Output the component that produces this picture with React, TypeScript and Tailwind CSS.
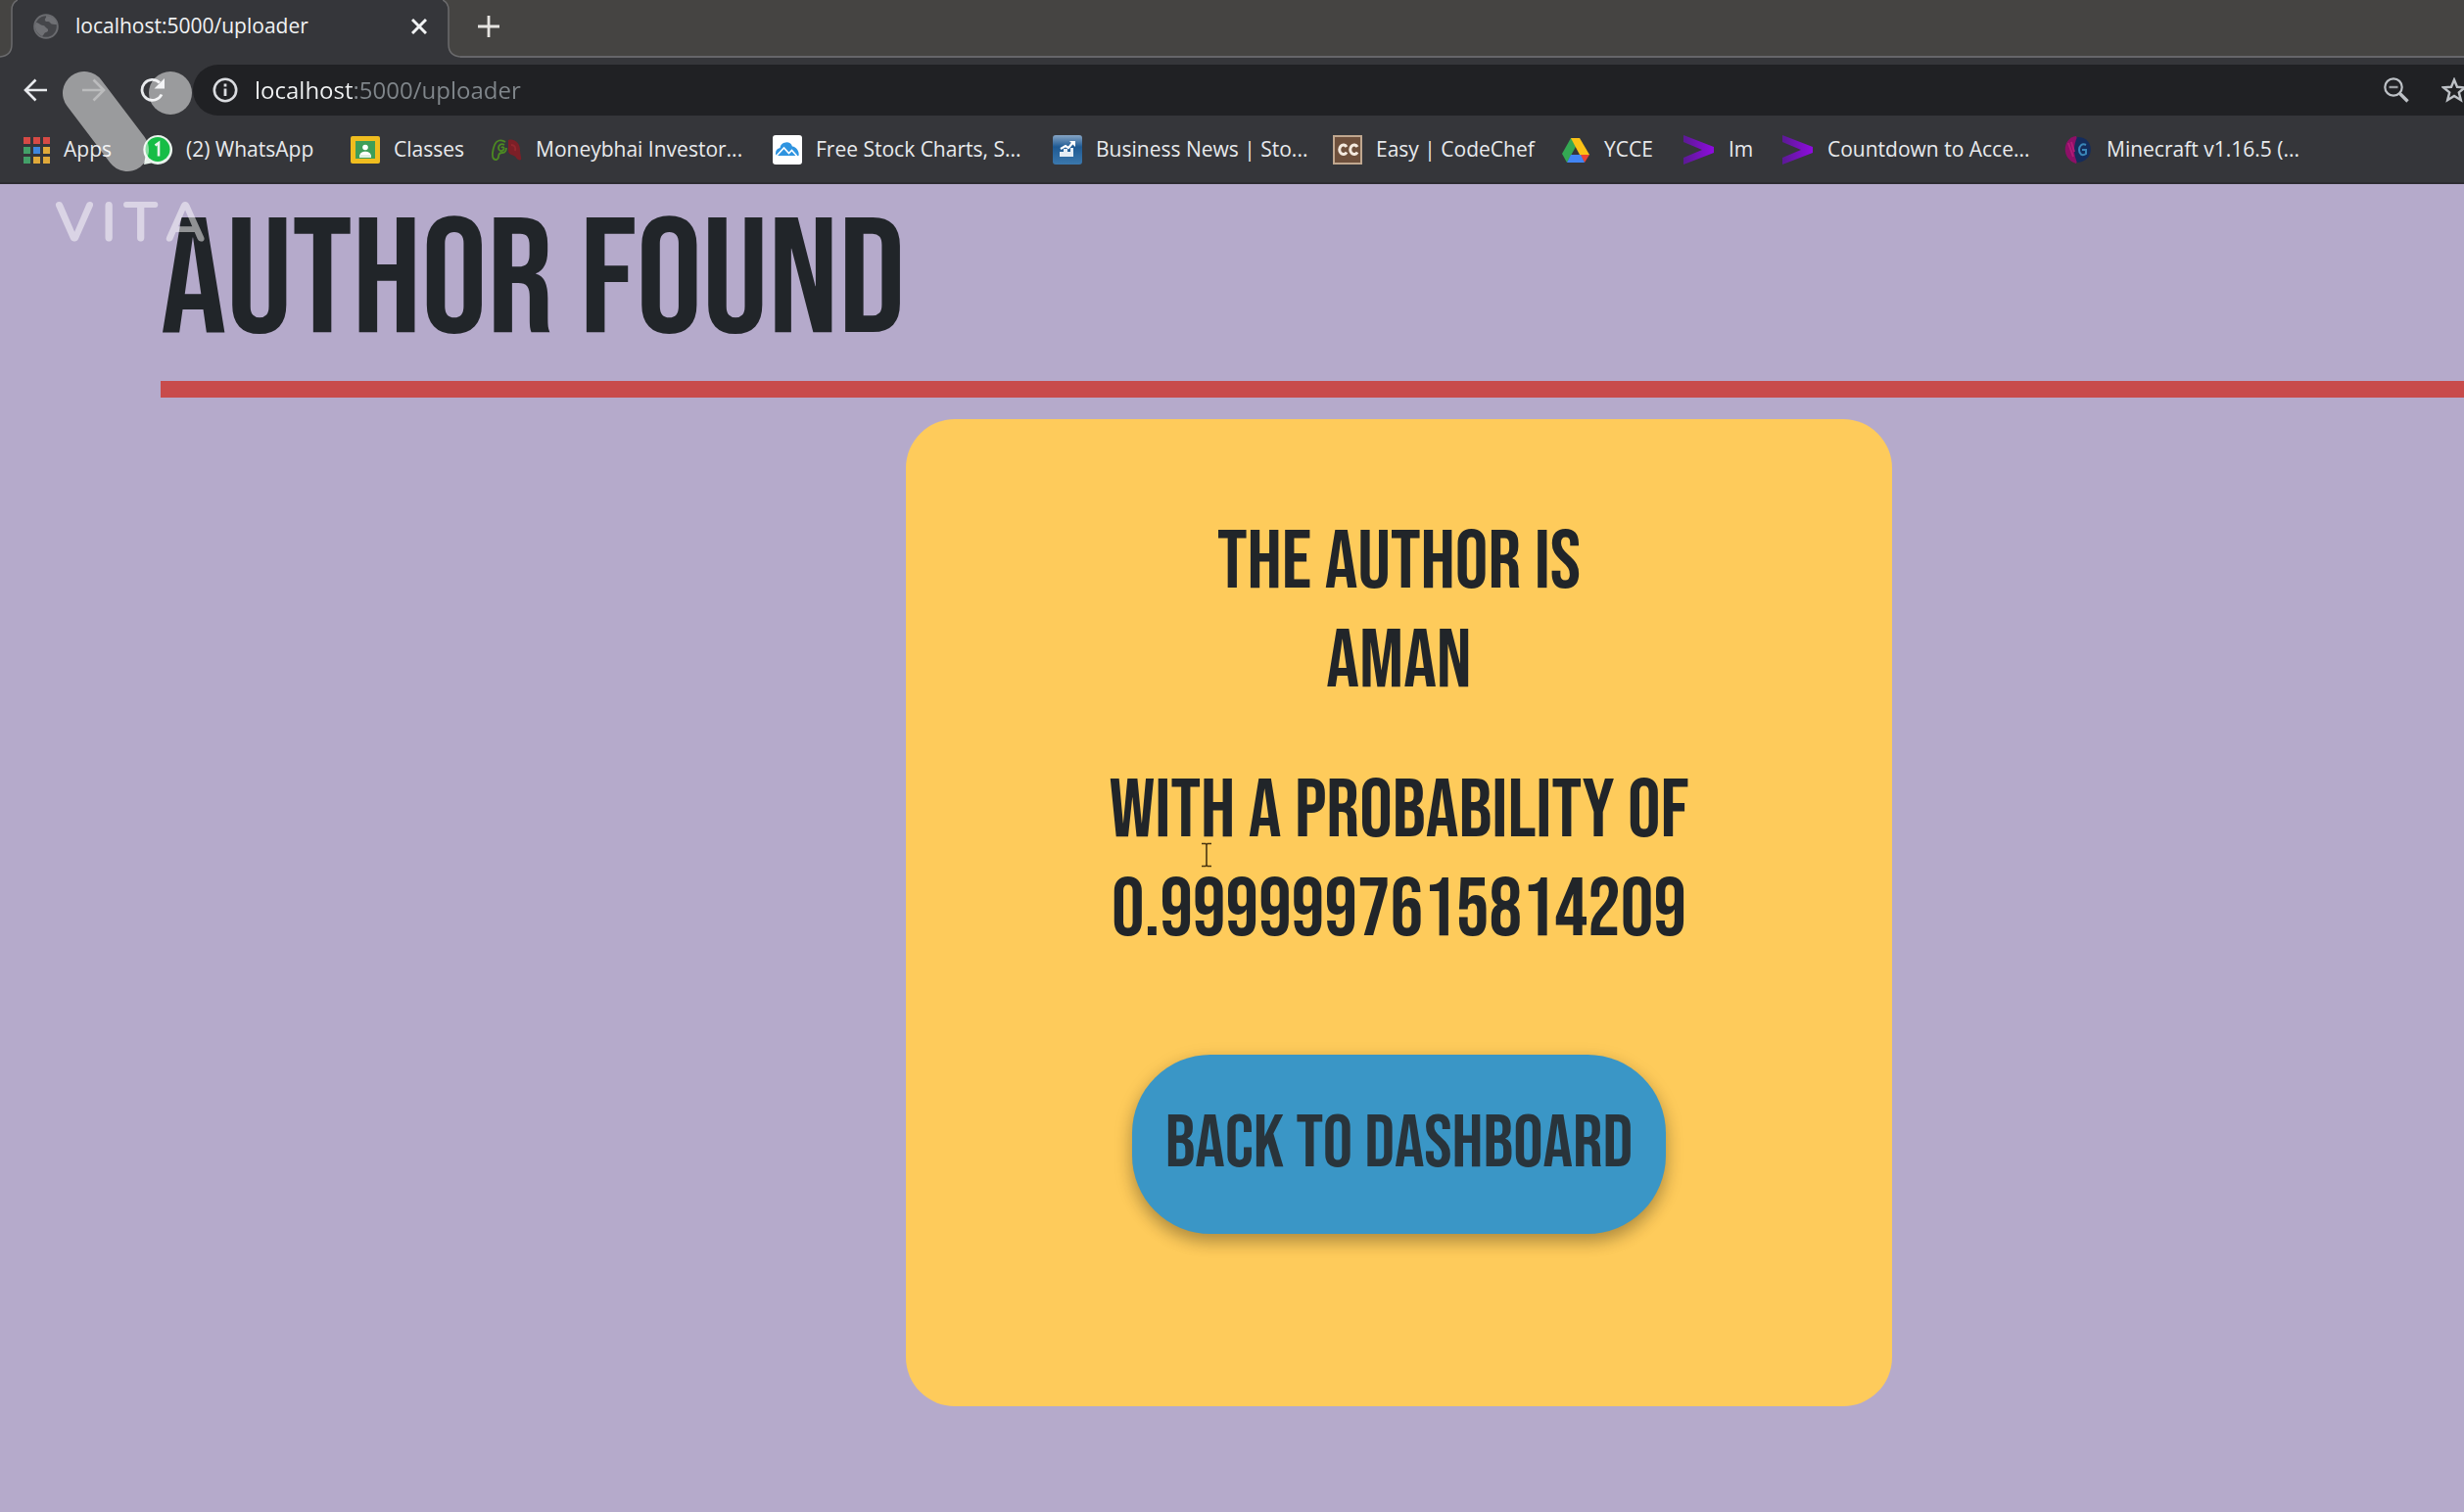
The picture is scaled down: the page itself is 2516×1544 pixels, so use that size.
import type { ReactNode } from 'react';

function GlobeIcon() {
  return (
    <svg viewBox="0 0 26 26" className="size-[26px] shrink-0" aria-hidden="true">
      <circle cx="13" cy="13" r="11.8" fill="#45464a" stroke="#6a6b6f" strokeWidth="2" />
      <path d="M3 9c3 0 4 3 7 3 2 0 2 2 4 3s1 4-1 4-2 3-4 4C5 21 2 17 2 13c0-2 0-3 1-4zM13 2c1 2-2 3-1 5s4 0 5 2 4 2 7 2c0-5-5-9-11-9z" fill="#6f7074" />
    </svg>
  );
}

function AppsIcon() {
  const colors = ['#d64a45', '#d64a45', '#d64a45', '#43a068', '#3f86dd', '#e0a93a', '#43a068', '#e0a93a', '#e0a93a'];
  return (
    <svg viewBox="0 0 28 28" className="size-7 shrink-0" aria-hidden="true">
      {colors.map((c, i) => (
        <rect key={i} x={1 + (i % 3) * 10} y={1 + Math.floor(i / 3) * 10} width="7" height="7" fill={c} />
      ))}
    </svg>
  );
}

function WhatsAppIcon() {
  return (
    <svg viewBox="0 0 30 30" className="size-[30px] shrink-0" aria-hidden="true">
      <path d="M15 0a15 15 0 1 1-6.500 28.500L1 30l1.300-7.500A15 15 0 0 1 15 0z" fill="#e9f3ec" />
      <circle cx="15" cy="14.500" r="12.500" fill="#16bd46" />
      <path d="M12.500 10.500l3.500-2.500v13.500" fill="none" stroke="#e9f3ec" strokeWidth="2.600" />
    </svg>
  );
}

function ClassroomIcon() {
  return (
    <svg viewBox="0 0 30 28" className="h-7 w-[30px] shrink-0" aria-hidden="true">
      <rect width="30" height="28" rx="2" fill="#f0bd1f" />
      <rect x="5" y="5" width="20" height="18" fill="#3f9e58" />
      <circle cx="15" cy="11.500" r="2.800" fill="#fff" />
      <path d="M9.500 19.500c0-5 11-5 11 0z" fill="#fff" />
      <rect x="9" y="19" width="12" height="3" fill="#dff0e2" />
    </svg>
  );
}

function MoneybhaiIcon() {
  return (
    <svg viewBox="0 0 32 24" className="h-6 w-8 shrink-0" aria-hidden="true">
      <path d="M15 4C11 1 6 2 4 7s-3 12-1 14 5 1 5-2 1-4 4-4 4-3 4-5M14 7c-3-2-6 0-6 3s3 4 5 2-1-4-2-2" fill="none" stroke="#4c8a22" strokeWidth="1.800" />
      <path d="M18 2c7-2 12 4 12 10 0 5 2 9 1 10s-4 0-5-2-3-2-5-3-3-2-3-5 0-7 0-10z" fill="#7c1f27" />
      <path d="M21 7c3 0 5 2 4 6" fill="none" stroke="#94272f" strokeWidth="2" />
    </svg>
  );
}

function StockChartsIcon() {
  return (
    <svg viewBox="0 0 30 30" className="size-[30px] shrink-0" aria-hidden="true">
      <rect width="30" height="30" rx="3" fill="#fff" />
      <path d="M4 21a5 5 0 0 1 3.500-8 6.500 6.500 0 0 1 12.500-1.500c4 .5 7.500 5 6.500 9.500H4z" fill="#2f94e0" />
      <path d="M4 21l7.500-8 5 5.500 3-3 5 5.500" fill="none" stroke="#fff" strokeWidth="1.600" />
    </svg>
  );
}

function BusinessIcon() {
  return (
    <svg viewBox="0 0 30 30" className="size-[30px] shrink-0" aria-hidden="true">
      <defs>
        <linearGradient id="biz" x1="0" y1="0" x2="0" y2="1">
          <stop offset="0" stopColor="#86a5c5" />
          <stop offset=".4" stopColor="#1f5a93" />
          <stop offset="1" stopColor="#3b78ad" />
        </linearGradient>
      </defs>
      <rect width="30" height="30" rx="3" fill="url(#biz)" />
      <path d="M7 22v-5h4v-3h4v3h3v-4h3v9z" fill="#e4ecf4" />
      <path d="M8 14l5-3 3 2 5-6" fill="none" stroke="#fff" strokeWidth="2.200" />
      <path d="M17 6h6v6z" fill="#fff" />
    </svg>
  );
}

function CodeChefIcon() {
  return (
    <svg viewBox="0 0 30 30" className="size-[30px] shrink-0" aria-hidden="true">
      <rect x="1" y="1" width="28" height="28" fill="#6e503c" stroke="#c0a78f" strokeWidth="2" />
      <path d="M14 12a4 4.800 0 1 0 0 5.500M25 12a4 4.800 0 1 0 0 5.500" fill="none" stroke="#f3e9de" strokeWidth="3" />
    </svg>
  );
}

function DriveIcon() {
  return (
    <svg viewBox="0 0 30 27" className="h-[27px] w-[30px] shrink-0" aria-hidden="true">
      <path d="M10 1h5l1 7L6 26 1 17z" fill="#34a853" />
      <path d="M10 1h9l10 17H19z" fill="#fbc116" />
      <path d="M29 18l-5 8-5-8z" fill="#ea4335" />
      <path d="M10 18h10l4 8H6z" fill="#4285f4" />
    </svg>
  );
}

function AccentureIcon() {
  return (
    <svg viewBox="0 0 32 30" className="h-[30px] w-8 shrink-0" aria-hidden="true">
      <defs>
        <linearGradient id="acc" x1="0" x2="1" y1="0" y2="0">
          <stop offset="0" stopColor="#5b1a94" />
          <stop offset="1" stopColor="#8f0be0" />
        </linearGradient>
      </defs>
      <path d="M0 0l31 12v6L0 30v-7l19-8L0 7z" fill="url(#acc)" />
    </svg>
  );
}

function MinecraftIcon() {
  return (
    <svg viewBox="0 0 30 28" className="h-7 w-[30px] shrink-0" aria-hidden="true">
      <path d="M13 0C-2 2-2 24 13 28c4-9 4-19 0-28z" fill="#8d1067" />
      <path d="M14 1c17-1 20 24 0 26-4-9-4-17 0-26z" fill="#142c5c" />
      <path d="M23 9c-4-2-7 1-7 5s3 7 7 4v-4h-4" fill="none" stroke="#3a86b8" strokeWidth="2" />
      <path d="M5 7l5 14M8 6l3 10" stroke="#b01c77" strokeWidth="2" />
    </svg>
  );
}

const bookmarks: { label: string; icon: ReactNode; width: string }[] = [
  { label: 'Apps', icon: <AppsIcon />, width: 'w-[123px]' },
  { label: '(2) WhatsApp', icon: <WhatsAppIcon />, width: 'w-[212px]' },
  { label: 'Classes', icon: <ClassroomIcon />, width: 'w-[143px]' },
  { label: 'Moneybhai Investor...', icon: <MoneybhaiIcon />, width: 'w-[288px]' },
  { label: 'Free Stock Charts, S...', icon: <StockChartsIcon />, width: 'w-[286px]' },
  { label: 'Business News | Sto...', icon: <BusinessIcon />, width: 'w-[286px]' },
  { label: 'Easy | CodeChef', icon: <CodeChefIcon />, width: 'w-[233px]' },
  { label: 'YCCE', icon: <DriveIcon />, width: 'w-[125px]' },
  { label: 'Im', icon: <AccentureIcon />, width: 'w-[101px]' },
  { label: 'Countdown to Acce...', icon: <AccentureIcon />, width: 'w-[287px]' },
  { label: 'Minecraft v1.16.5 (...', icon: <MinecraftIcon />, width: 'w-[260px]' },
];

function TabStrip() {
  return (
    <div className="flex h-[59px] bg-[#454442]">
      <svg viewBox="0 0 18 59" className="h-[59px] w-[18px] shrink-0" aria-hidden="true">
        <path d="M0 59V58Q12 57 12 45V10Q12 3 18 0V59z" fill="#35363a" />
        <path d="M0 58Q12 57 12 45V10Q12 3 18 0" fill="none" stroke="#6b6b6d" strokeWidth="1.500" />
      </svg>
      <div role="tab" aria-selected="true" className="flex w-[434px] items-center bg-[#35363a] pr-4 pb-1.5 pl-4 text-[21px] text-[#f1f3f4]">
        <GlobeIcon />
        <span className="ml-[17px] flex-1 whitespace-nowrap">localhost:5000/uploader</span>
        <button aria-label="Close tab" className="grid size-4 place-items-center">
          <svg viewBox="0 0 16 16" className="size-4" aria-hidden="true">
            <path d="M1 1l14 14M15 1L1 15" stroke="#f1f3f4" strokeWidth="3" />
          </svg>
        </button>
      </div>
      <svg viewBox="0 0 18 59" className="h-[59px] w-[18px] shrink-0" aria-hidden="true">
        <path d="M18 59V58Q6 57 6 45V10Q6 3 0 0V59z" fill="#35363a" />
        <path d="M18 58Q6 57 6 45V10Q6 3 0 0" fill="none" stroke="#6b6b6d" strokeWidth="1.500" />
      </svg>
      <div className="flex-1 border-b-2 border-[#66666a] pt-4 pl-[18px]">
        <button aria-label="New tab" className="block size-[22px]">
          <svg viewBox="0 0 22 22" className="size-[22px]" aria-hidden="true">
            <path d="M11 0v22M0 11h22" stroke="#e6e4e1" strokeWidth="2.800" />
          </svg>
        </button>
      </div>
    </div>
  );
}

function Toolbar() {
  return (
    <div className="flex h-[59px] items-center pt-[7px]">
      <button aria-label="Back" className="ml-6 size-6">
        <svg viewBox="0 0 24 24" className="size-6" aria-hidden="true">
          <path d="M24 12H2M12.500 1.500L2 12l10.500 10.500" fill="none" stroke="#e8eaed" strokeWidth="2.600" />
        </svg>
      </button>
      <button aria-label="Forward" className="ml-9 size-6">
        <svg viewBox="0 0 24 24" className="size-6" aria-hidden="true">
          <path d="M0 12h22M11.500 1.500L22 12 11.500 22.500" fill="none" stroke="#77787b" strokeWidth="2.600" />
        </svg>
      </button>
      <button aria-label="Reload" className="ml-[35px] size-[26px]">
        <svg viewBox="0 0 26 26" className="size-[26px]" aria-hidden="true">
          <path d="M22 17.500A10.500 10.500 0 1 1 20 5.500" fill="none" stroke="#e8eaed" strokeWidth="2.800" />
          <path d="M25 1v10.500H14.500z" fill="#e8eaed" />
        </svg>
      </button>
      <div className="ml-7 flex h-[52px] flex-1 items-center rounded-l-full bg-[#202124] pl-5">
        <svg viewBox="0 0 26 26" className="size-[26px] shrink-0" aria-hidden="true">
          <circle cx="13" cy="13" r="11.200" fill="none" stroke="#dadce0" strokeWidth="2.600" />
          <path d="M13 11.500v7.500M13 6.500v3" stroke="#dadce0" strokeWidth="2.800" />
        </svg>
        <input
          aria-label="Address"
          defaultValue="localhost:5000/uploader"
          className="ml-[17px] min-w-0 flex-1 bg-[linear-gradient(90deg,#f1f3f4_101px,#80868b_101px)] bg-clip-text text-2xl text-transparent outline-none"
        />
        <button aria-label="Zoom" className="size-[26px]">
          <svg viewBox="0 0 26 26" className="size-[26px]" aria-hidden="true">
            <circle cx="10" cy="10" r="8.700" fill="none" stroke="#bdc1c6" strokeWidth="2.200" />
            <path d="M5.500 10h9" stroke="#9a9da1" strokeWidth="2.400" />
            <path d="M16.500 16.500l8 8" stroke="#bdc1c6" strokeWidth="3.400" />
          </svg>
        </button>
        <button aria-label="Bookmark this page" className="-mr-[3px] ml-[33px] size-[26px]">
          <svg viewBox="0 0 26 26" className="size-[26px]" aria-hidden="true">
            <path d="M13 2.500l3 7.300 7.800.6-6 5 2 7.800-6.800-4.300-6.800 4.300 2-7.800-6-5 7.800-.6z" fill="none" stroke="#bdc1c6" strokeWidth="2.400" />
          </svg>
        </button>
      </div>
    </div>
  );
}

function BookmarksBar() {
  return (
    <nav aria-label="Bookmarks" className="flex h-[70px] items-center border-b-2 border-[#2d2c31] pt-0.5 pl-[23px]">
      {bookmarks.map((b) => (
        <a key={b.label} href="#" className={`flex shrink-0 items-center gap-3.5 text-[21px] whitespace-nowrap text-[#e8eaed] ${b.width}`}>
          {b.icon}
          <span>{b.label}</span>
        </a>
      ))}
    </nav>
  );
}

function Watermark() {
  return (
    <div className="pointer-events-none absolute top-[72px] left-[56px] w-[154px] text-white opacity-50">
      <svg viewBox="0 0 154 104" className="h-[104px] w-[154px]" aria-hidden="true">
        <path d="M30 23l44 58" stroke="#fff" strokeWidth="44" strokeLinecap="round" />
        <circle cx="118" cy="23" r="22" fill="#fff" />
      </svg>
      <div className="mt-3 flex justify-between font-['Nunito','Lato',sans-serif] text-[56px] leading-[80px] font-bold">
        <span>V</span>
        <span>I</span>
        <span>T</span>
        <span>A</span>
      </div>
    </div>
  );
}

function TextCursor() {
  return (
    <svg viewBox="0 0 12 26" className="absolute top-[432px] left-[301px] h-[26px] w-3" aria-hidden="true">
      <path d="M1 1.500h4l1 1 1-1h4M1 24.500h4l1-1 1 1h4M6 2v22" fill="none" stroke="#4a3510" strokeWidth="1.600" />
    </svg>
  );
}

export default function App() {
  return (
    <div className="relative flex min-h-screen flex-col overflow-hidden bg-[#b5aacb] font-['Open_Sans',sans-serif]">
      <header className="bg-[#35363a]">
        <TabStrip />
        <Toolbar />
        <BookmarksBar />
      </header>
      <main className="-mr-[177px] ml-[164px] font-['Bebas_Neue',sans-serif] text-[#212529]">
        <h1 className="border-b-[17px] border-[#c84b4b] text-[168px] leading-[201px]">AUTHOR FOUND</h1>
        <section className="relative mx-auto mt-[22px] flex w-[1007px] flex-col items-center rounded-[50px] bg-[#fecb5b] pt-24 pb-44 text-center text-[84px] leading-[101px]">
          <p>
            THE AUTHOR IS
            <br />
            AMAN
          </p>
          <p className="mt-[52px]">
            WITH A PROBABILITY OF
            <br />
            0.9999997615814209
          </p>
          <button className="mt-[97px] h-[183px] rounded-[80px] bg-[#3a96c6] px-[34px] text-[76px] leading-[91px] text-[#29343b] shadow-[0_8px_16px_rgba(0,0,0,0.2),0_6px_20px_rgba(0,0,0,0.15)]">
            BACK TO DASHBOARD
          </button>
          <TextCursor />
        </section>
      </main>
      <Watermark />
    </div>
  );
}
